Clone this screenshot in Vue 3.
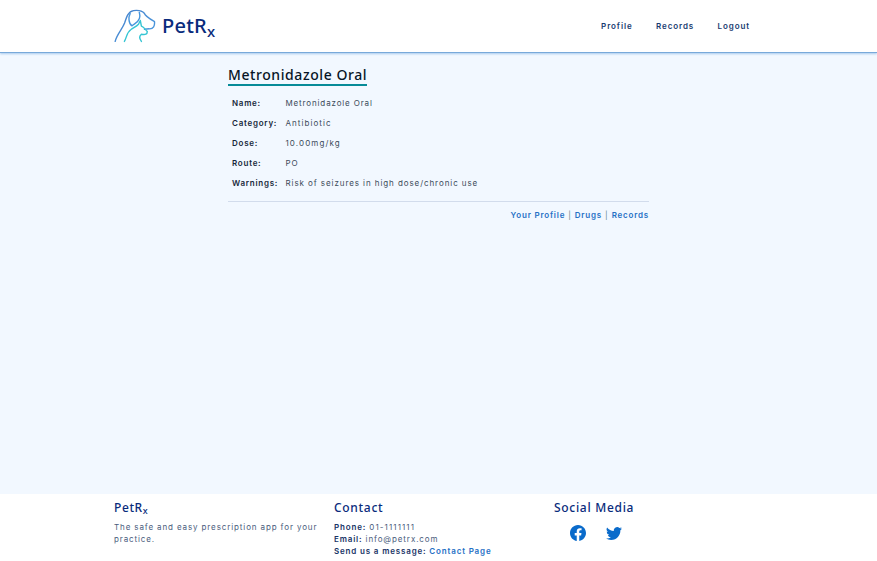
<script setup>
const links = ['Profile', 'Records', 'Logout']
const rows = [
  ['Name:', 'Metronidazole Oral', 'name'],
  ['Category:', 'Antibiotic', 'category'],
  ['Dose:', '10.00mg/kg', 'dose'],
  ['Route:', 'PO', 'route'],
  ['Warnings:', 'Risk of seizures in high dose/chronic use', 'warnings'],
]
</script>

<template>
  <div class="page">
    <header class="header">
      <a class="brand">
        <svg class="logo" viewBox="0 0 42 34" fill="none" stroke-linecap="round" stroke-linejoin="round">
          <defs>
            <linearGradient id="dog" x1="0" y1="0" x2="1" y2="1">
              <stop offset="0" stop-color="#477fc9" />
              <stop offset="1" stop-color="#4b9de2" />
            </linearGradient>
          </defs>
          <path stroke="url(#dog)" d="M1.2 32.4C2.6 25.5 8.400 20 10.600 14C12.600 7.800 14.200 2.400 19.500 1.600C23.400 1.100 28 1.600 30.300 4.300C31.300 7.500 34.600 9.300 40.500 12.600C40.900 16.500 39.600 20.200 35 19.800L30.500 20.300" />
          <path stroke="#4796dd" d="M16.200 4.500C14.300 8 14.400 14.500 18 16.800C20.300 14.500 24.100 13.600 25.400 9.500C26.500 6.500 25.600 4.800 25.300 3.500" />
          <path stroke="#35c5d3" d="M10.400 32.400C13 28 12.500 23.500 17 20.500C19.800 18.500 22.300 17.500 24.500 15.200L26.300 11.500L27.400 17.200C30.200 18.400 31 20.300 33.300 22.400C33.300 25.200 31.500 26 27.400 25.200C25 27 25.400 29.700 27.400 32.400" />
        </svg>
        <span class="brand-name">PetR<span class="rx">x</span></span>
      </a>
      <nav class="nav">
        <a v-for="link in links" :key="link">{{ link }}</a>
      </nav>
    </header>

    <main class="main">
      <h1 class="title">Metronidazole Oral</h1>
      <dl class="details">
        <div v-for="row in rows" :key="row[0]" class="row">
          <dt>{{ row[0] }}</dt>
          <dd><span :class="row[2]">{{ row[1] }}</span></dd>
        </div>
      </dl>
      <p class="crumbs"><a>Your Profile</a> <i>|</i> <a>Drugs</a> <i>|</i> <a>Records</a></p>
    </main>

    <footer class="footer">
      <section>
        <h2 class="foot-brand">PetR<span class="rx">x</span></h2>
        <p class="about">The safe and easy prescription app for your<br />practice.</p>
      </section>
      <section>
        <h2>Contact</h2>
        <p><b>Phone:</b> <span class="phone">01-1111111</span></p>
        <p><b>Email:</b> info@petrx.com</p>
        <p class="message"><b>Send us a message: <a>Contact Page</a></b></p>
      </section>
      <section>
        <h2>Social Media</h2>
        <div class="social">
          <svg viewBox="0 0 16 16"><path d="M16 8.049c0-4.446-3.582-8.050-8-8.050C3.580 0-.002 3.603-.002 8.050c0 4.017 2.926 7.347 6.750 7.951v-5.625h-2.030V8.050H6.750V6.275c0-2.017 1.195-3.131 3.022-3.131.876 0 1.791.157 1.791.157v1.980h-1.009c-.993 0-1.303.621-1.303 1.258v1.510h2.218l-.354 2.326H9.250V16c3.824-.604 6.750-3.934 6.750-7.951z" /></svg>
          <svg viewBox="0 0 16 16"><path d="M5.026 15c6.038 0 9.341-5.003 9.341-9.334 0-.14 0-.282-.006-.422A6.685 6.685 0 0 0 16 3.542a6.658 6.658 0 0 1-1.889.518 3.301 3.301 0 0 0 1.447-1.817 6.533 6.533 0 0 1-2.087.793A3.286 3.286 0 0 0 7.875 6.030a9.325 9.325 0 0 1-6.767-3.429 3.289 3.289 0 0 0 1.018 4.382A3.323 3.323 0 0 1 .640 6.575v.045a3.288 3.288 0 0 0 2.632 3.218 3.203 3.203 0 0 1-.865.115 3.230 3.230 0 0 1-.614-.057 3.283 3.283 0 0 0 3.067 2.277A6.588 6.588 0 0 1 .780 13.580a6.320 6.320 0 0 1-.780-.045A9.344 9.344 0 0 0 5.026 15z" /></svg>
        </div>
      </section>
    </footer>
  </div>
</template>

<style>
body { background: #f2f8ff; }
</style>

<style scoped>
.page {
  display: flex;
  flex-direction: column;
  height: 561px;
  overflow: hidden;
  background: #f2f8ff;
  color: #3c4b5a;
  font: 8px/12px Inter, sans-serif;
  letter-spacing: 0.9px;
  white-space: nowrap;
}
h1, h2, p, dl, dd { margin: 0; }
.header {
  display: flex;
  justify-content: space-between;
  box-sizing: border-box;
  height: 53px;
  padding: 0 127px 0 114px;
  background: #fff;
  border-bottom: 1px solid #78a9da;
  box-shadow: 0 1px 2px #a9cbed;
}
.brand { display: flex; }
.logo { width: 42px; height: 34px; margin-top: 9px; stroke-width: 1.4; }
.brand-name {
  margin: 13px 0 0 6px;
  color: #092b7c;
  font: 500 20px/26px "Noto Sans", sans-serif;
  letter-spacing: 0.25px;
}
.rx { position: relative; top: 0.25em; font-size: 0.75em; }
.nav { display: flex; gap: 23.500px; padding-top: 20px; color: #183b70; font-weight: 600; }
.main { flex: 1; width: 421px; margin: 0 auto; padding-top: 13px; }
.title {
  display: inline-block;
  height: 18px;
  border-bottom: 2px solid #078b98;
  color: #081526;
  font: 500 14px/18px "Noto Sans", sans-serif;
  letter-spacing: 0.58px;
  vertical-align: top;
}
.details { padding: 7px 4px 9px; border-bottom: 1px solid #d2dcec; }
.row { display: grid; grid-template-columns: 53px 1fr; height: 20px; line-height: 20px; }
.details .row:last-child { height: 19px; }
dd { padding-left: 0.5px; }
dt { color: #17283b; font-weight: 600; letter-spacing: 0.75px; }
.name { letter-spacing: 0.86px; }
.dose { letter-spacing: 1.100px; }
.category { letter-spacing: 1.050px; }
.warnings { letter-spacing: 0.92px; }
.crumbs { padding-top: 7px; text-align: right; letter-spacing: 0.8px; }
.crumbs a, .message a { color: #2570c5; font-weight: 600; }
.crumbs i { color: #648b8b; font-style: normal; }
.footer {
  display: grid;
  grid-template-columns: repeat(3, 220px);
  box-sizing: border-box;
  height: 67px;
  padding: 5px 0 0 114px;
  background: #fff;
  color: #4a5c7d;
}
.footer h2 {
  height: 22px;
  color: #092b7c;
  font: 500 12px/18px "Noto Sans", sans-serif;
  letter-spacing: 0.7px;
}
.footer .foot-brand { letter-spacing: 0.6px; }
.footer b { color: #183366; font-weight: 600; letter-spacing: 0.84px; }
.about { letter-spacing: 0.88px; }
.phone { letter-spacing: 1.100px; }
.social { display: flex; gap: 20px; padding: 4px 0 0 16px; fill: #0a6bcb; }
.social svg { width: 16px; height: 16px; }
</style>
